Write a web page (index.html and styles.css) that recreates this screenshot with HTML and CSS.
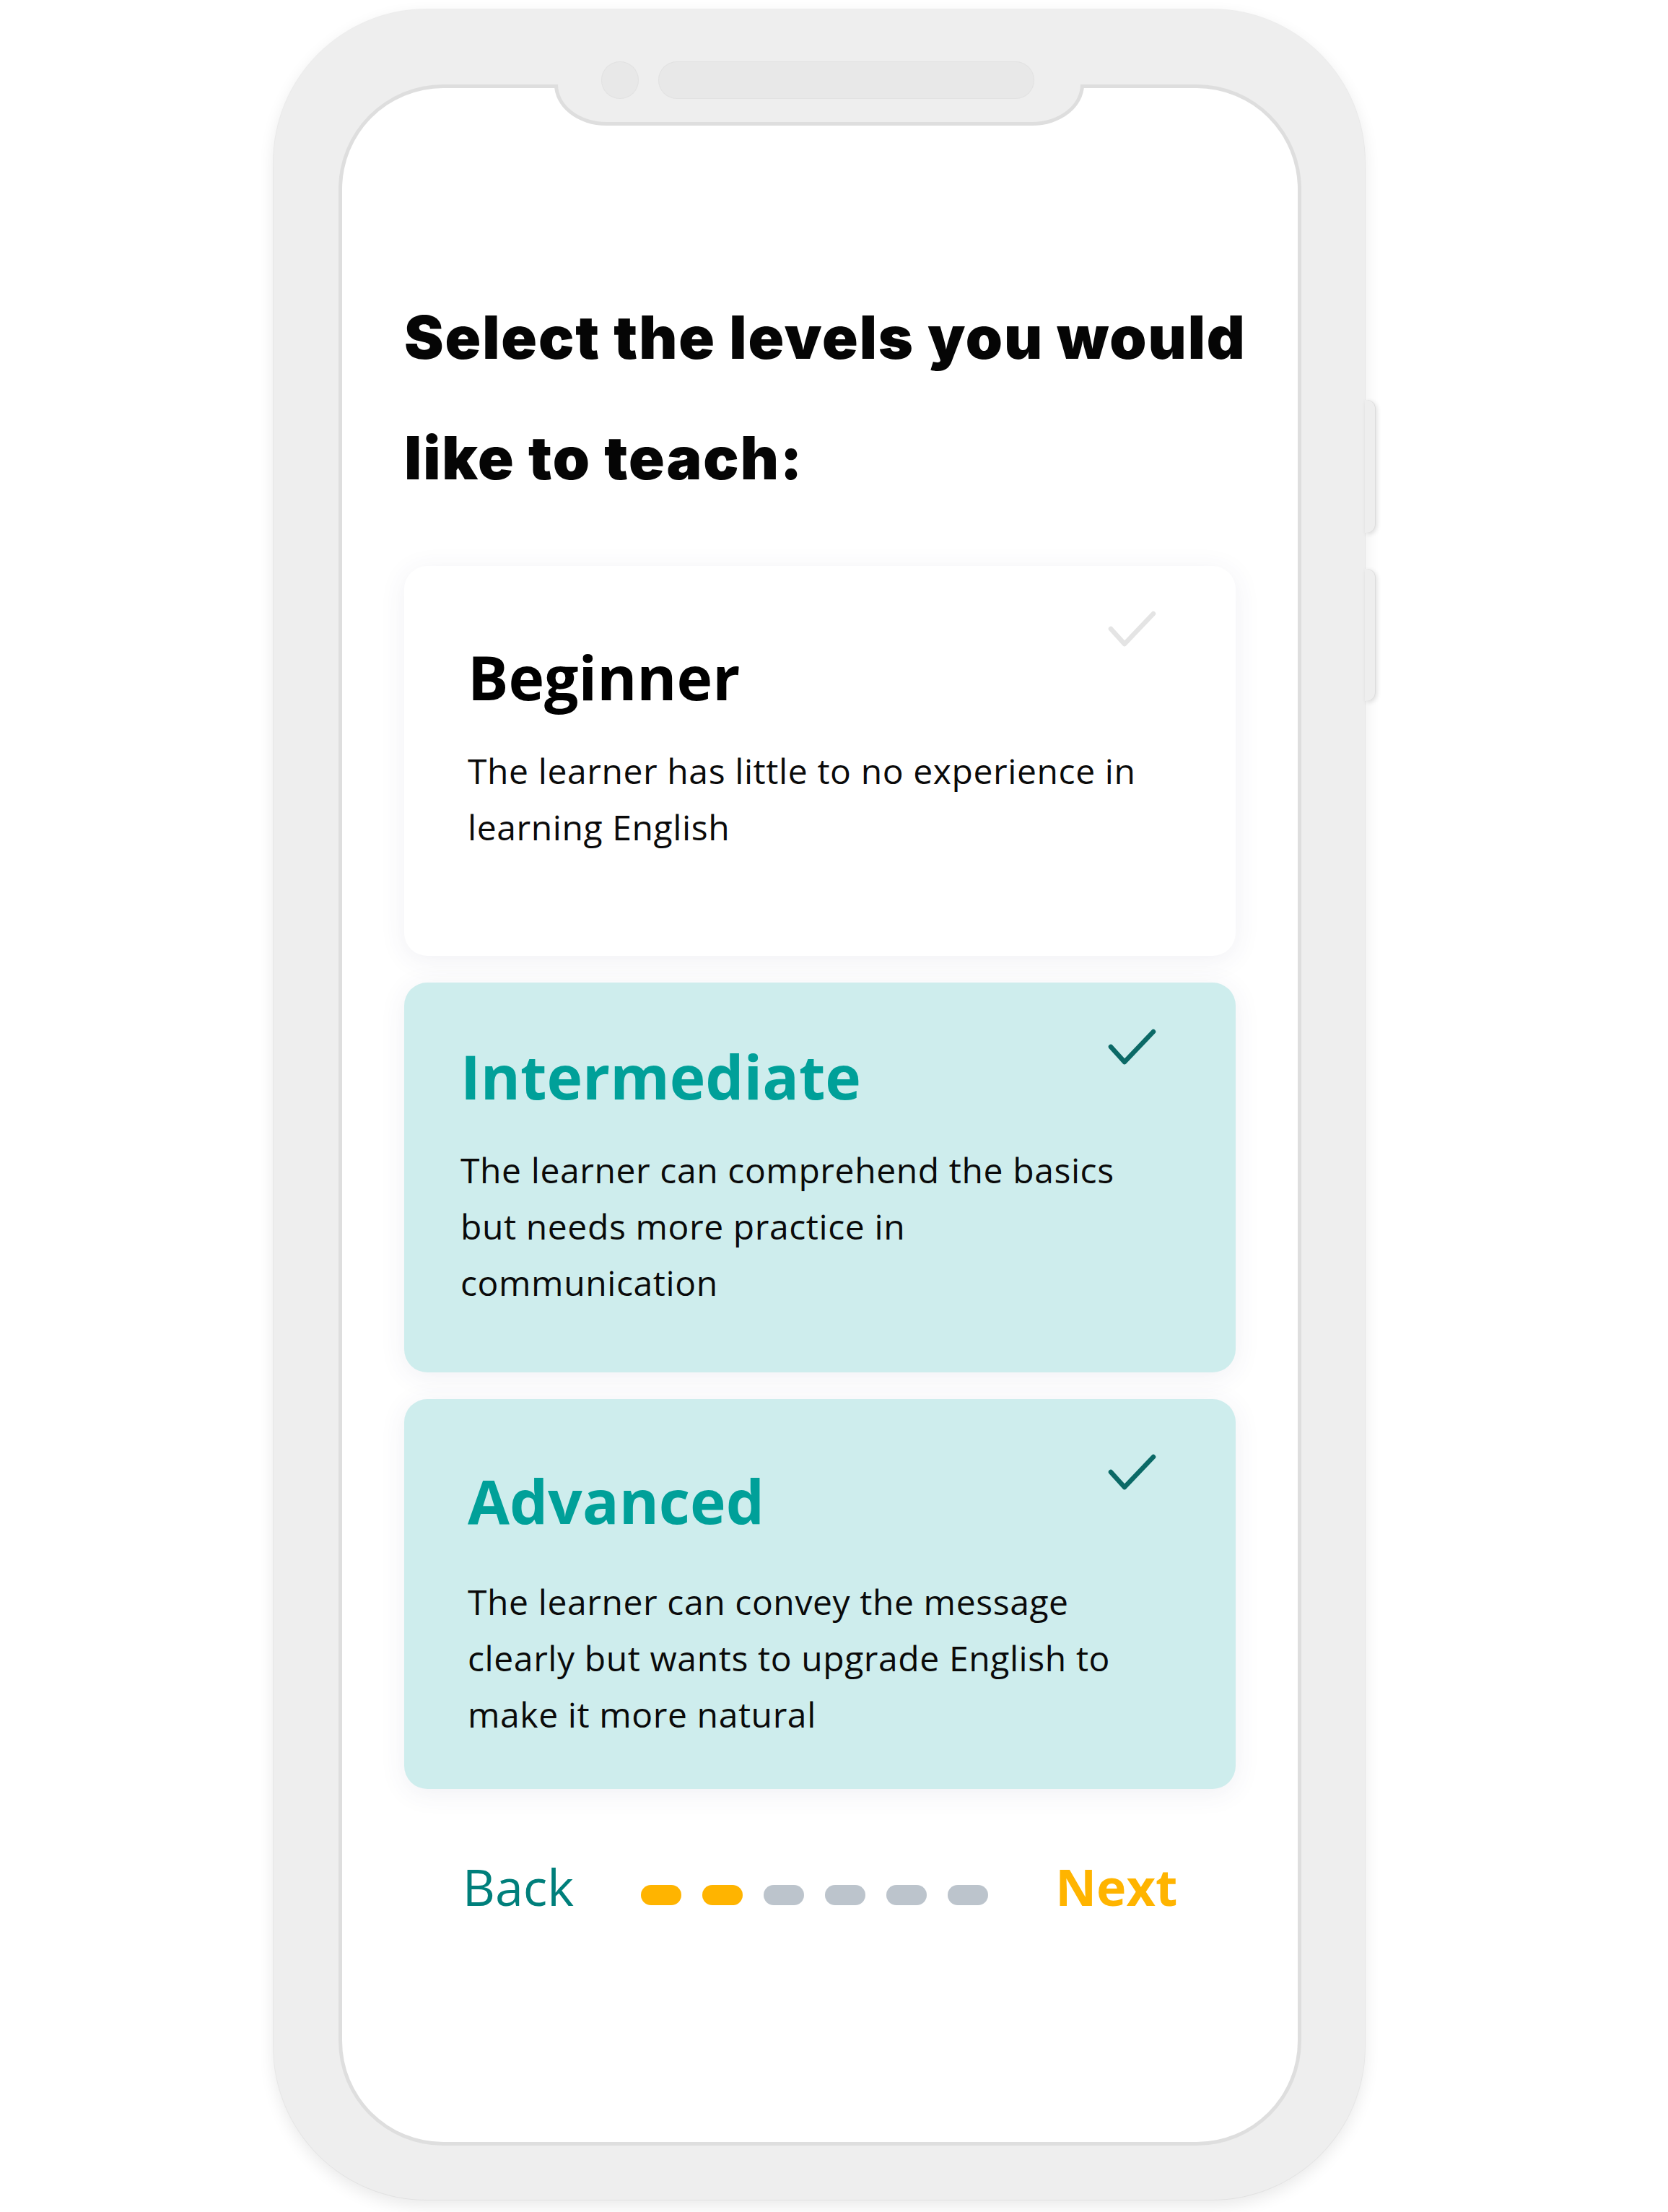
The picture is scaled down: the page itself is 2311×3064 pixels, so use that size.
FILE: index.html
```html
<!DOCTYPE html>
<html lang="en">
<head>
<meta charset="utf-8">
<title>Select levels</title>
<link rel="stylesheet" href="styles.css">
</head>
<body>
<div class="page">
  <div class="phone">
    <span class="side-btn side-btn--top"></span>
    <span class="side-btn side-btn--bottom"></span>
    <div class="screen">
      <div class="notch">
        <span class="camera"></span>
        <span class="speaker"></span>
      </div>
      <h1 class="heading">Select the levels you would<br>like to teach:</h1>
      <div class="levels">
        <div class="level">
          <h2 class="level__title">Beginner</h2>
          <p class="level__desc">The learner has little to no experience in<br>learning English</p>
          <svg class="check" viewBox="0 0 70 52" width="70" height="52"><polyline points="5,26 24,47 64,5"/></svg>
        </div>
        <div class="level level--selected level--intermediate">
          <h2 class="level__title">Intermediate</h2>
          <p class="level__desc">The learner can comprehend the basics<br>but needs more practice in<br>communication</p>
          <svg class="check" viewBox="0 0 70 52" width="70" height="52"><polyline points="5,26 24,47 64,5"/></svg>
        </div>
        <div class="level level--selected level--advanced">
          <h2 class="level__title">Advanced</h2>
          <p class="level__desc">The learner can convey the message<br>clearly but wants to upgrade English to<br>make it more natural</p>
          <svg class="check" viewBox="0 0 70 52" width="70" height="52"><polyline points="5,26 24,47 64,5"/></svg>
        </div>
      </div>
      <div class="pager">
        <span class="pager__back">Back</span>
        <div class="dots">
          <span class="dot dot--on"></span>
          <span class="dot dot--on"></span>
          <span class="dot"></span>
          <span class="dot"></span>
          <span class="dot"></span>
          <span class="dot"></span>
        </div>
        <span class="pager__next">Next</span>
      </div>
    </div>
  </div>
</div>
</body>
</html>
```
FILE: styles.css
```css
html, body {
  margin: 0;
  padding: 0;
  background: #ffffff;
}

.page {
  width: 2311px;
  height: 3064px;
  padding-top: 13px;
  box-sizing: border-box;
}

.phone {
  position: relative;
  margin-left: 379px;
  width: 1512px;
  height: 3034px;
  box-sizing: border-box;
  padding: 109px 93px 80px 95px;
  background: #eeeeee;
  border-radius: 212px;
  box-shadow: 0 0 0 1px rgba(0, 0, 0, 0.05), 0 8px 22px rgba(0, 0, 0, 0.09);
}

.side-btn {
  position: absolute;
  left: 100%;
  width: 15px;
  background: #eeeeee;
  border-radius: 0 12px 12px 0;
  box-shadow: 2px 2px 6px rgba(0, 0, 0, 0.12), inset -1px 0 0 #dcdcdc;
}

.side-btn--top {
  top: 541px;
  height: 184px;
}

.side-btn--bottom {
  top: 775px;
  height: 183px;
}

.screen {
  position: relative;
  height: 100%;
  box-sizing: border-box;
  background: #ffffff;
  border-radius: 140px;
  box-shadow: 0 0 0 5px #dedede;
  padding: 262px 86px 0;
}

.notch {
  position: absolute;
  top: -5px;
  left: 294px;
  width: 724px;
  height: 52px;
  background: #eeeeee;
  border: 5px solid #dedede;
  border-top: none;
  border-radius: 0 0 72px 72px / 0 0 57px 57px;
}

.camera {
  position: absolute;
  top: -32px;
  left: 60px;
  width: 52px;
  height: 52px;
  border-radius: 50%;
  background: #e8e8e8;
  box-shadow: inset 0 0 0 1px #e2e2e2;
}

.speaker {
  position: absolute;
  top: -32px;
  left: 139px;
  width: 521px;
  height: 52px;
  border-radius: 26px;
  background: #e8e8e8;
  box-shadow: inset 0 0 0 1px #e2e2e2;
}

.heading {
  margin: 0;
  white-space: nowrap;
  font-family: Inter, "Open Sans", sans-serif;
  font-weight: 900;
  font-size: 82px;
  line-height: 167px;
  letter-spacing: 1.9px;
  color: #050505;
}

.levels {
  margin-top: 66px;
  display: flex;
  flex-direction: column;
  gap: 37px;
}

.level {
  position: relative;
  height: 540px;
  box-sizing: border-box;
  padding: 104px 90px 0 88px;
  background: #ffffff;
  border-radius: 32px;
  box-shadow: 0 6px 36px rgba(60, 60, 120, 0.08);
}

.level--selected {
  background: #ceeded;
}

.level--intermediate {
  padding-top: 80px;
  padding-left: 78px;
}

.level--advanced {
  padding-top: 91px;
}

.level__title {
  margin: 0;
  font-family: "Open Sans", sans-serif;
  font-weight: 700;
  font-size: 84px;
  line-height: 100px;
  color: #000000;
}

.level--selected .level__title {
  color: #00a099;
}

.level__desc {
  margin: 41px 0 0;
  font-family: "Open Sans", sans-serif;
  font-weight: 400;
  font-size: 48px;
  line-height: 78px;
  letter-spacing: 0.6px;
  color: #0a0a0a;
}

.level--advanced .level__desc {
  margin-top: 51px;
}

.check {
  position: absolute;
  top: 61px;
  right: 108px;
  fill: none;
  stroke: #e4e4e4;
  stroke-width: 6.5;
  stroke-linecap: round;
  stroke-linejoin: round;
}

.level--selected .check {
  stroke: #0b6966;
}

.level--intermediate .check {
  top: 63px;
}

.level--advanced .check {
  top: 75px;
}

.pager {
  margin-top: 100px;
  display: flex;
  justify-content: center;
  align-items: flex-end;
  gap: 93px;
  font-family: "Open Sans", sans-serif;
  font-size: 70px;
  line-height: 70px;
}

.pager__back {
  color: #007f7b;
  font-weight: 400;
}

.pager__next {
  color: #ffb400;
  font-weight: 700;
}

.dots {
  display: flex;
  gap: 29px;
  margin-bottom: 9px;
}

.dot {
  width: 56px;
  height: 28px;
  border-radius: 14px;
  background: #bcc4cc;
}

.dot--on {
  background: #ffb400;
}
```
